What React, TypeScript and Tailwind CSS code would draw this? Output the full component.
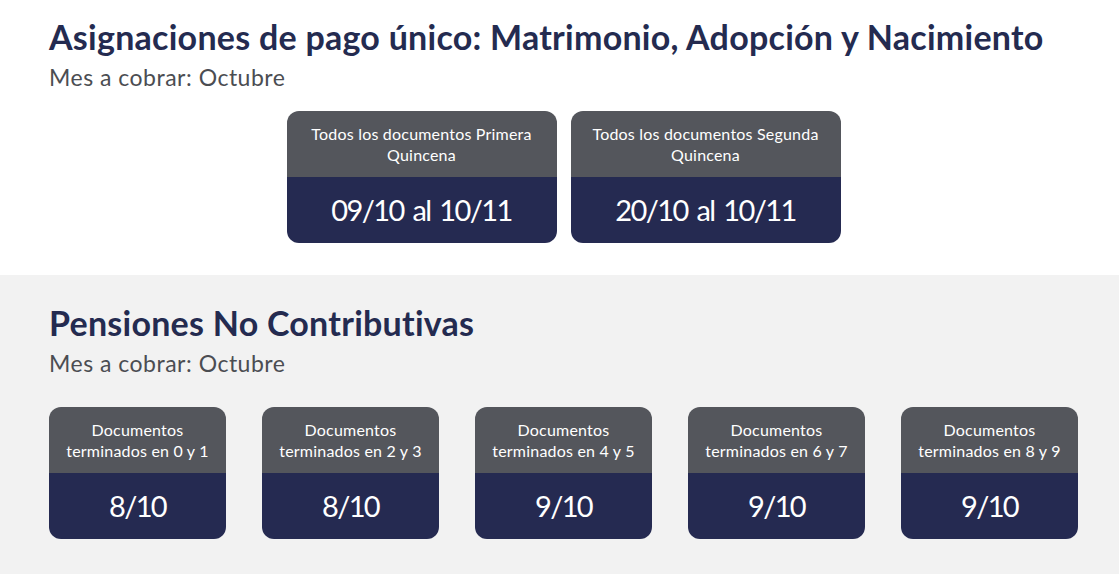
const navy = 'bg-[#252a51]';

type Card = { label: string; date: string };

const unicos: Card[] = [
  { label: 'Todos los documentos Primera Quincena', date: '09/10 al 10/11' },
  { label: 'Todos los documentos Segunda Quincena', date: '20/10 al 10/11' },
];

const pensiones: Card[] = [
  { label: 'Documentos terminados en 0 y 1', date: '8/10' },
  { label: 'Documentos terminados en 2 y 3', date: '8/10' },
  { label: 'Documentos terminados en 4 y 5', date: '9/10' },
  { label: 'Documentos terminados en 6 y 7', date: '9/10' },
  { label: 'Documentos terminados en 8 y 9', date: '9/10' },
];

function DateCard({ card, wide }: { card: Card; wide?: boolean }) {
  return (
    <div
      className={`${wide ? 'w-[270px]' : 'w-[177px]'} h-[132px] rounded-xl overflow-hidden flex flex-col`}
    >
      <div
        className={`h-[66px] bg-[#54565c] text-white text-[16px] tracking-[0.2px] leading-[21px] text-center flex items-center justify-center ${wide ? 'px-5' : 'px-3'}`}
      >
        {card.label}
      </div>
      <div
        className={`h-[66px] ${navy} text-white text-[29px] tracking-[-1.6px] [word-spacing:3px] flex items-center justify-center`}
      >
        {card.date}
      </div>
    </div>
  );
}

function Heading({ title }: { title: string }) {
  return (
    <>
      <h2 className="text-[34px] font-bold tracking-[0.25px] text-[#242b50] leading-[44px]">
        {title}
      </h2>
      <p className="text-[23px] tracking-[0.5px] text-[#4b4d52] leading-[30px] mt-[3px]">
        Mes a cobrar: Octubre
      </p>
    </>
  );
}

export default function App() {
  return (
    <div className="min-h-[574px] bg-white font-['Lato',sans-serif]">
      {/* Pago único */}
      <section className="pl-[49px] pr-[41px] pt-[15px] pb-[32px]">
        <Heading title="Asignaciones de pago único: Matrimonio, Adopción y Nacimiento" />
        <div className="flex justify-center gap-[14px] mt-[19px]">
          {unicos.map((c) => (
            <DateCard key={c.label} card={c} wide />
          ))}
        </div>
      </section>

      {/* Pensiones */}
      <section className="bg-[#f2f2f2] pl-[49px] pr-[41px] pt-[26px] pb-[35px]">
        <Heading title="Pensiones No Contributivas" />
        <div className="flex justify-between mt-[29px]">
          {pensiones.map((c) => (
            <DateCard key={c.label} card={c} />
          ))}
        </div>
      </section>
    </div>
  );
}
